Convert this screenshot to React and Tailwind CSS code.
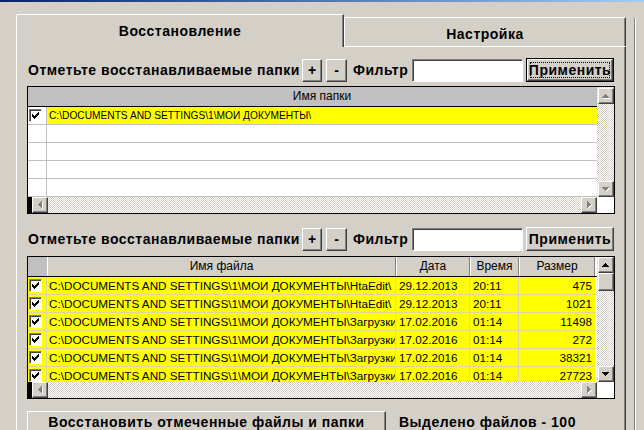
import React from "react";

const RAISED =
  "bg-[#d4d0c8] border border-t-white border-l-white border-r-[#404040] border-b-[#404040] shadow-[inset_-1px_-1px_#808080]";
const SUNKEN =
  "bg-white border border-t-[#808080] border-l-[#808080] border-r-white border-b-white shadow-[inset_1px_1px_#404040]";
const CHECKER =
  "bg-[repeating-conic-gradient(#ffffff_0_25%,#d4d0c8_0_50%)] bg-[length:2px_2px]";
const LBL = "text-[14px] font-bold tracking-[0.5px]";

const ARROWS = {
  up: { w: 7, h: 4, d: "M3 0h1v1h1v1h1v1h1v1H0V3h1V2h1V1h1Z" },
  down: { w: 7, h: 4, d: "M0 0h7v1H6v1H5v1H4v1H3V3H2V2H1V1H0Z" },
  left: { w: 4, h: 7, d: "M3 0h1v7H3V6H2V5H1V4H0V3h1V2h1V1h1Z" },
  right: { w: 4, h: 7, d: "M0 0h1v1h1v1h1v1h1v1H3v1H2v1H1v1H0Z" },
};

function Arrow({ dir, enabled }) {
  const a = ARROWS[dir];
  return (
    <svg
      width={a.w + 1}
      height={a.h + 1}
      viewBox={`0 0 ${a.w + 1} ${a.h + 1}`}
      shapeRendering="crispEdges"
    >
      {!enabled && <path d={a.d} fill="#ffffff" transform="translate(1,1)" />}
      <path d={a.d} fill={enabled ? "#000000" : "#808080"} />
    </svg>
  );
}

function SBtn({ dir, enabled, className = "" }) {
  return (
    <div className={`${RAISED} flex items-center justify-center shrink-0 ${className}`}>
      <Arrow dir={dir} enabled={enabled} />
    </div>
  );
}

function Check() {
  return (
    <div className="w-[13px] h-[13px] bg-white border border-t-[#808080] border-l-[#808080] border-r-white border-b-white shadow-[inset_1px_1px_#404040] flex items-center justify-center">
      <svg width="7" height="7" viewBox="0 0 7 7" shapeRendering="crispEdges">
        <path d="M6 0h1v3H6v1H5v1H4v1H3v1H2V6H1V5H0V2h1v1h1v1h1V3h1V2h1V1h1Z" fill="#000" />
      </svg>
    </div>
  );
}

function FilterRow({ defaultBtn }) {
  return (
    <div className="flex items-center h-[24px]">
      <div className={`w-[275px] pl-px whitespace-nowrap ${LBL}`}>
        Отметьте восстанавливаемые папки
      </div>
      <div className={`${RAISED} w-[20px] h-[23px] flex items-center justify-center text-[14px] font-bold`}>+</div>
      <div className={`${RAISED} ml-[4px] w-[21px] h-[23px] flex items-center justify-center text-[14px] font-bold`}>-</div>
      <div className={`w-[65px] pl-[6px] ${LBL}`}>Фильтр</div>
      <div className={`${SUNKEN} w-[111px] h-[23px]`} />
      {defaultBtn ? (
        <div className="ml-[3px] w-[88px] h-[24px] border border-black">
          <div className={`${RAISED} w-full h-full flex items-center justify-center p-[2px]`}>
            <div className={`w-full h-full border border-dotted border-black flex items-center justify-center whitespace-nowrap ${LBL}`}>
              Применить
            </div>
          </div>
        </div>
      ) : (
        <div className={`${RAISED} ml-[3px] w-[88px] h-[24px] flex items-center justify-center whitespace-nowrap ${LBL}`}>
          Применить
        </div>
      )}
    </div>
  );
}

function HScroll() {
  return (
    <div className="flex h-[16px] shrink-0">
      <div className="w-[4px] bg-black" />
      <SBtn dir="left" className="w-[16px] h-[16px]" />
      <div className={`flex-1 ${CHECKER}`} />
      <SBtn dir="right" className="w-[16px] h-[16px]" />
      <div className="w-[17px] bg-white" />
    </div>
  );
}

function Table1() {
  return (
    <div className="mt-[4px] w-[588px] h-[128px] border border-black bg-white flex flex-col">
      <div className="flex h-[110px]">
        <div className="w-[569px] flex flex-col">
          <div className="flex h-[20px] bg-[#c0c0c0] border-b border-black shrink-0">
            <div className="w-[19px]" />
            <div className="flex-1 text-center text-[12px] leading-[19px]">Имя папки</div>
          </div>
          <div className="flex h-[18px] border-b border-[#c0c0c0] bg-[#ffff00]">
            <div className="w-[19px] bg-white border-r border-[#c0c0c0] flex items-center pl-[1px]">
              <Check />
            </div>
            <div className="flex-1 pl-[2px] text-[10.2px] leading-[17px] whitespace-nowrap overflow-hidden">
              {"C:\\DOCUMENTS AND SETTINGS\\1\\МОИ ДОКУМЕНТЫ\\"}
            </div>
          </div>
          {[0, 1, 2, 3].map((i) => (
            <div key={i} className="flex h-[18px] border-b border-[#c0c0c0] bg-white">
              <div className="w-[19px] border-r border-[#c0c0c0]" />
              <div className="flex-1" />
            </div>
          ))}
        </div>
        <div className={`w-[17px] flex flex-col ${CHECKER}`}>
          <SBtn dir="up" className="w-[16px] h-[16px] ml-px mt-px" />
          <div className="flex-1" />
          <SBtn dir="down" className="w-[16px] h-[16px] ml-px" />
        </div>
      </div>
      <HScroll />
    </div>
  );
}

const FILES = [
  ["HtaEdit\\", "29.12.2013", "20:11", "475"],
  ["HtaEdit\\", "29.12.2013", "20:11", "1021"],
  ["Загрузки\\", "17.02.2016", "01:14", "11498"],
  ["Загрузки\\", "17.02.2016", "01:14", "272"],
  ["Загрузки\\", "17.02.2016", "01:14", "38321"],
  ["Загрузки\\", "17.02.2016", "01:14", "27723"],
];

const HCELL =
  "border-l border-l-white border-r border-r-[#808080] text-center text-[12px] leading-[18px] whitespace-nowrap overflow-hidden";

function Table2() {
  return (
    <div className="mt-[5px] w-[588px] h-[143px] border border-black bg-white flex flex-col">
      <div className="flex h-[125px]">
        <div className="w-[569px] flex flex-col">
          <div className="flex h-[20px] bg-[#d4d0c8] border-b border-black shrink-0">
            <div className="w-[19px] bg-[#c0c0c0]" />
            <div className={`w-[349px] ${HCELL}`}>Имя файла</div>
            <div className={`w-[74px] ${HCELL}`}>Дата</div>
            <div className={`w-[49px] ${HCELL}`}>Время</div>
            <div className={`w-[76px] ${HCELL}`}>Размер</div>
            <div className="flex-1 bg-white" />
          </div>
          <div className="h-[105px] overflow-hidden">
            {FILES.map((f, i) => (
              <div key={i} className="flex h-[18px] border-b border-[#d8d8a0] bg-[#ffff00] text-[11.7px] leading-[17px]">
                <div className="w-[19px] border-r border-[#d8d8a0] flex items-center pl-[1px]">
                  <Check />
                </div>
                <div className="w-[349px] pl-[2px] border-r border-[#d8d8a0] whitespace-nowrap overflow-hidden">
                  {"C:\\DOCUMENTS AND SETTINGS\\1\\МОИ ДОКУМЕНТЫ\\" + f[0]}
                </div>
                <div className="w-[74px] pl-[3px] border-r border-[#d8d8a0] whitespace-nowrap overflow-hidden">{f[1]}</div>
                <div className="w-[49px] pl-[3px] border-r border-[#d8d8a0] whitespace-nowrap overflow-hidden">{f[2]}</div>
                <div className="w-[76px] pr-[3px] text-right whitespace-nowrap overflow-hidden">{f[3]}</div>
                <div className="flex-1 bg-white" />
              </div>
            ))}
          </div>
        </div>
        <div className={`w-[17px] flex flex-col ${CHECKER}`}>
          <SBtn dir="up" enabled className="w-[16px] h-[16px] ml-px" />
          <div className={`${RAISED} w-[16px] h-[18px] ml-px`} />
          <div className="flex-1" />
          <SBtn dir="down" enabled className="w-[16px] h-[16px] ml-px" />
        </div>
      </div>
      <HScroll />
    </div>
  );
}

export default function App() {
  return (
    <div className="w-[644px] h-[430px] overflow-hidden bg-[#d4d0c8] text-black font-['Liberation_Sans',Arial,sans-serif]">
      <div className="h-[2px] bg-linear-to-r from-[#0a246a] to-[#a6caf0]" />
      <div className="flex">
        <div className="ml-[16px] mt-[12px] w-[610px] flex flex-col">
          <div className="flex items-end">
            <div className={`relative z-10 -mb-px w-[328px] h-[33px] bg-[#d4d0c8] border-t border-l border-t-white border-l-white border-r border-r-[#404040] shadow-[inset_-1px_0_#808080] rounded-tl-[2px] text-center pt-[6px] ${LBL}`}>
              Восстановление
            </div>
            <div className={`w-[282px] h-[29px] border-t border-l border-t-white border-l-white border-r border-r-[#404040] shadow-[inset_-1px_0_#808080] text-center pt-[6px] ${LBL}`}>
              Настройка
            </div>
          </div>
          <div className="h-[400px] border-t border-l border-t-white border-l-white border-r border-r-[#404040] shadow-[inset_-1px_0_#808080] pl-[10px] pt-[11px]">
            <FilterRow defaultBtn />
            <Table1 />
            <div className="mt-[13px]">
              <FilterRow />
            </div>
            <Table2 />
            <div className="mt-[12px] flex items-start">
              <div className={`${RAISED} w-[359px] h-[30px] text-center whitespace-nowrap ${LBL}`}>
                Восстановить отмеченные файлы и папки
              </div>
              <div className={`ml-[13px] pt-[1px] ${LBL}`}>Выделено файлов - 100</div>
            </div>
          </div>
        </div>
        <div className="ml-[8px] mt-[16px] w-[2px] h-[420px] border-l border-l-[#808080] border-r border-r-white" />
      </div>
    </div>
  );
}
